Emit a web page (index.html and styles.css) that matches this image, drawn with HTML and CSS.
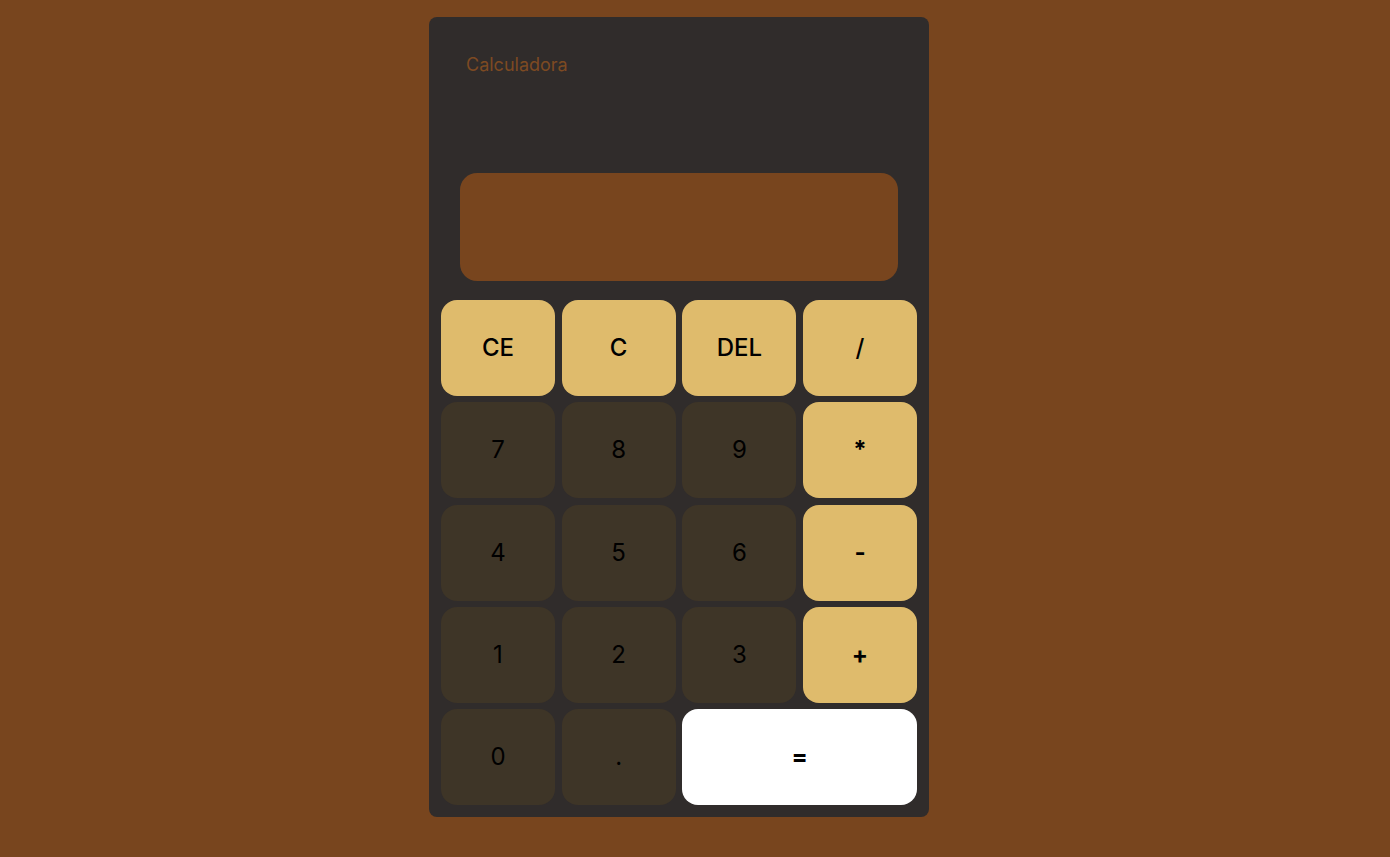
FILE: index.html
```html
<!DOCTYPE html>
<html lang="es">
<head>
<meta charset="utf-8">
<title>Calculadora</title>
<link rel="stylesheet" href="styles.css">
</head>
<body>
<div class="page">
  <div class="calc">
    <h1 class="title">Calculadora</h1>
    <div class="display"></div>
    <div class="keys">
      <button class="key fn">CE</button>
      <button class="key fn">C</button>
      <button class="key fn">DEL</button>
      <button class="key fn">/</button>
      <button class="key num">7</button>
      <button class="key num">8</button>
      <button class="key num">9</button>
      <button class="key op">*</button>
      <button class="key num">4</button>
      <button class="key num">5</button>
      <button class="key num">6</button>
      <button class="key op">-</button>
      <button class="key num">1</button>
      <button class="key num">2</button>
      <button class="key num">3</button>
      <button class="key op">+</button>
      <button class="key num">0</button>
      <button class="key num">.</button>
      <button class="key eq">=</button>
    </div>
  </div>
</div>
</body>
</html>
```
FILE: styles.css
```css
html, body {
  margin: 0;
  padding: 0;
  background: #78451e;
  height: 100%;
  font-family: Inter, "Noto Sans", sans-serif;
}

.page {
  padding: 17px 0 0 429px;
}

.calc {
  width: 500px;
  height: 800px;
  box-sizing: border-box;
  background: #302c2b;
  border-radius: 8px;
  padding: 12px;
  display: flex;
  flex-direction: column;
}

.title {
  margin: 25px 0 0 25px;
  font-size: 18px;
  font-weight: 400;
  line-height: 22px;
  color: #7e4a22;
}

.display {
  margin: 97px 19px 0 19px;
  height: 108px;
  background: #78451e;
  border-radius: 17px;
}

.keys {
  margin-top: 19px;
  display: grid;
  grid-template-columns: repeat(4, 1fr);
  grid-template-rows: repeat(5, 96px);
  column-gap: 6.67px;
  row-gap: 6.25px;
}

.key {
  border: none;
  border-radius: 16px;
  font-family: Inter, "Noto Sans", sans-serif;
  font-size: 24px;
  font-weight: 400;
  line-height: 1;
  color: #000;
  padding: 0;
  cursor: pointer;
}

.fn {
  background: #dfbb6c;
  font-weight: 500;
}

.op {
  background: #dfbb6c;
  font-weight: 700;
}

.num {
  background: #3e3527;
}

.eq {
  grid-column: span 2;
  background: #ffffff;
  font-weight: 700;
}
```
